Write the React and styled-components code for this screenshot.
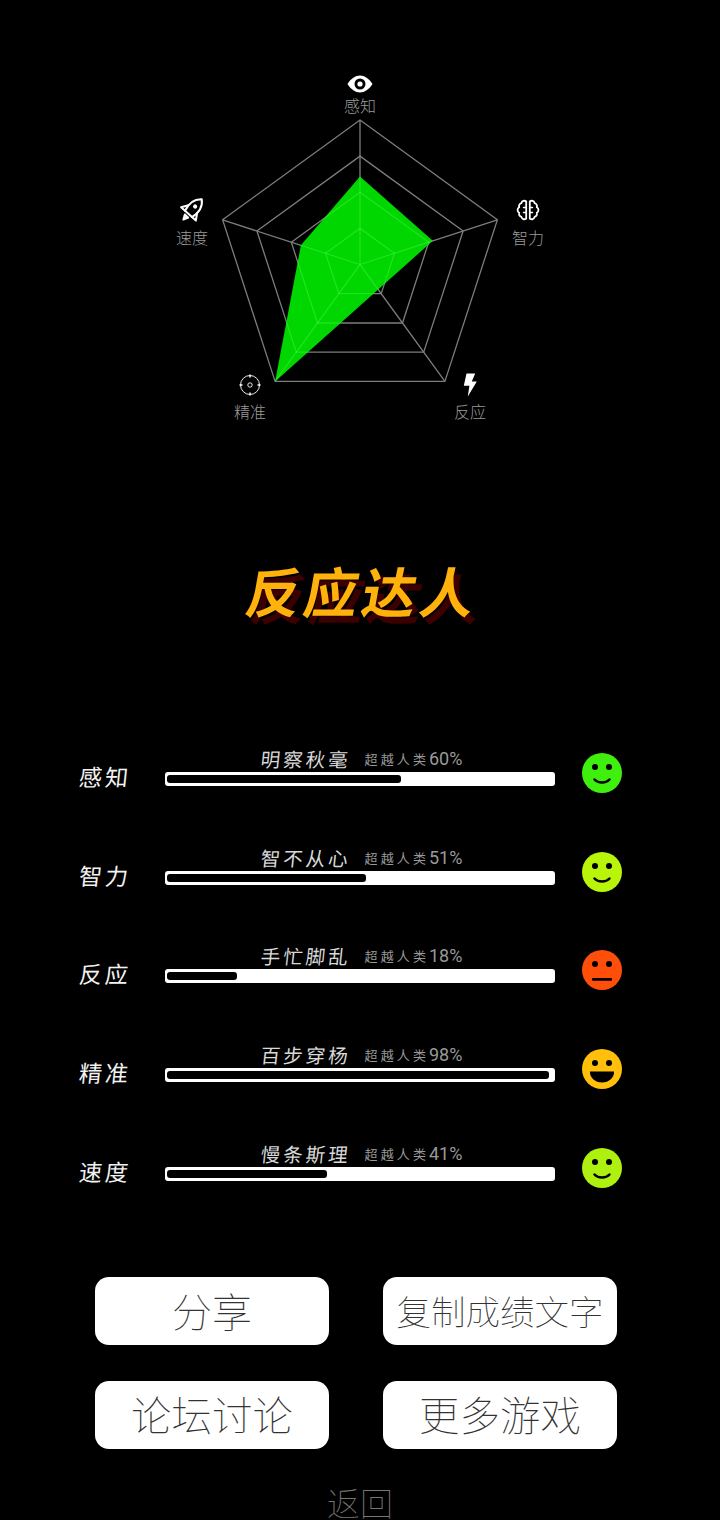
import React from "react";
import styled, { createGlobalStyle } from "styled-components";

const Global = createGlobalStyle`
  html, body { margin: 0; padding: 0; background: #000; }
  * { box-sizing: border-box; }
`;

const CJK = `"Noto Sans CJK SC", "Noto Sans CJK TC", sans-serif`;

const Page = styled.div`
  width: 720px;
  height: 1520px;
  overflow: hidden;
  background: #000;
  display: flex;
  flex-direction: column;
  font-family: Roboto, ${CJK};
`;

const Radar = styled.section`
  position: relative;
  width: 720px;
  height: 440px;
  flex: none;
`;

const RadarSvg = styled.svg`
  display: block;
  width: 720px;
  height: 440px;
`;

const Axis = styled.div`
  position: absolute;
  width: 60px;
  margin-left: -30px;
  display: flex;
  flex-direction: column;
  align-items: center;
`;

const AxisIcon = styled.div`
  height: 26px;
  display: flex;
  align-items: center;
  justify-content: center;
  color: #fff;
`;

const AxisLabel = styled.div`
  font-size: 16px;
  line-height: 20px;
  margin-top: ${(p) => p.$shift}px;
  font-weight: 300;
  color: #9a9a9a;
`;

const Title = styled.h1`
  margin: 120px 0 0;
  padding-left: 5px;
  height: 70px;
  text-align: center;
  font-size: 54px;
  line-height: 70px;
  font-weight: 700;
  letter-spacing: 4px;
  color: #ffb20c;
  text-shadow: 7px 7px 0 #3c0000;
  transform: skewX(-10deg);
`;

const List = styled.div`
  margin-top: 115px;
  display: flex;
  flex-direction: column;
  gap: 48.7px;
  padding-left: 80px;
`;

const Row = styled.div`
  display: grid;
  grid-template-columns: 85px 390px 40px;
  height: 50px;
`;

const RowLabel = styled.div`
  font-size: 23px;
  line-height: 30px;
  padding-top: 19px;
  letter-spacing: 3px;
  color: #f2f2f2;
  white-space: nowrap;
  transform-origin: left center;
  transform: skewX(-6deg);
`;

const Track = styled.div`
  display: flex;
  flex-direction: column;
`;

const Caption = styled.div`
  height: 27px;
  display: flex;
  justify-content: center;
  align-items: center;
  gap: 14px;
  padding-left: 3px;
  white-space: nowrap;
`;

const Motto = styled.span`
  font-size: 19.5px;
  letter-spacing: 3px;
  color: #d8d8d8;
  transform: skewX(-6deg);
`;

const Beat = styled.span`
  font-size: 18px;
  color: #999;
  display: flex;
  align-items: center;
`;

const BeatPrefix = styled.span`
  font-size: 13px;
  letter-spacing: 3.1px;
`;

const Bar = styled.div`
  position: relative;
  width: 390px;
  height: 14px;
  background: #fff;
  border-radius: 3px;
`;

const BarFill = styled.div`
  position: absolute;
  left: 2px;
  top: 3px;
  height: 8px;
  border-radius: 3px;
  background: #000;
`;

const Face = styled.svg`
  display: block;
  width: 40px;
  height: 40px;
  margin: 8px 0 0 27px;
`;

const Buttons = styled.div`
  margin: 87.2px 0 0 95px;
  display: grid;
  grid-template-columns: 234px 234px;
  grid-auto-rows: 68px;
  column-gap: 54px;
  row-gap: 36px;
`;

const Btn = styled.button`
  border: none;
  padding: 5px 0 0;
  background: #fff;
  border-radius: 14px;
  color: #333;
  font-family: inherit;
  font-weight: 100;
  font-size: ${(p) => p.$size}px;
  line-height: 63px;
  white-space: nowrap;
`;

const Back = styled.div`
  margin-top: 36px;
  text-align: center;
  font-size: 33px;
  line-height: 40px;
  font-weight: 100;
  color: #777;
`;

const CX = 360;
const CY = 264.5;
const R = 144.5;
const angles = [0, 72, 144, 216, 288].map((a) => (a * Math.PI) / 180);
const pt = (i, t) => [CX + R * t * Math.sin(angles[i]), CY - R * t * Math.cos(angles[i])];
const poly = (vals) => vals.map((v, i) => pt(i, v).map((n) => n.toFixed(1)).join(",")).join(" ");
const scorePoints = poly([0.61, 0.53, 0.214, 1, 0.43]);

const Grid = ({ stroke, clip }) => (
  <g fill="none" stroke={stroke} strokeWidth="1.3" clipPath={clip}>
    {[0.25, 0.5, 0.75, 1].map((t) => (
      <polygon key={t} points={poly([t, t, t, t, t])} />
    ))}
    {angles.map((_, i) => {
      const [x, y] = pt(i, 1);
      return <line key={i} x1={CX} y1={CY} x2={x} y2={y} />;
    })}
  </g>
);

const EyeIcon = () => (
  <svg width="26" height="20" viewBox="0 0 26 20">
    <path fillRule="evenodd" fill="currentColor" d="M0.5 10C4 4.5 8.5 1.5 13 1.5S22 4.5 25.5 10C22 15.5 17.5 18.5 13 18.5S4 15.5 .5 10ZM13 4.5a5.5 5.5 0 1 0 0 11a5.5 5.5 0 1 0 0-11Z" />
    <circle cx="13" cy="10" r="2.6" fill="currentColor" />
  </svg>
);

const BrainIcon = () => (
  <svg width="24" height="24" viewBox="0 0 24 24" fill="none" stroke="currentColor" strokeWidth="1.8" strokeLinejoin="round" strokeLinecap="round">
    <path d="M10.2 3.4A3 3 0 0 0 5.4 5.2A3 3 0 0 0 3.2 9.2A3.2 3.2 0 0 0 3.2 14.8A3 3 0 0 0 5.4 18.8A3 3 0 0 0 10.2 20.6Z" />
    <path d="M13.8 3.4A3 3 0 0 1 18.6 5.2A3 3 0 0 1 20.8 9.2A3.2 3.2 0 0 1 20.8 14.8A3 3 0 0 1 18.6 18.8A3 3 0 0 1 13.8 20.6Z" />
    <path d="M10.2 9.5H7.5M10.2 14.5H7.5M13.8 9.5H16.5M13.8 14.5H16.5" strokeWidth="1.4" />
  </svg>
);

const BoltIcon = () => (
  <svg width="16" height="24" viewBox="0 0 16 24">
    <path fill="currentColor" d="M4.5 0.5H13.2L9.8 8.5H14.8L5.8 23.5L7.4 12.8H1.8Z" />
  </svg>
);

const TargetIcon = () => (
  <svg width="22" height="22" viewBox="0 0 22 22" fill="none" stroke="currentColor" strokeWidth="0.9">
    <circle cx="11" cy="11" r="9.5" />
    <circle cx="11" cy="11" r="2.2" />
    <path strokeWidth="1.5" d="M11 0.5V3.5M11 18.5V21.5M0.5 11H3.5M18.5 11H21.5" />
  </svg>
);

const RocketIcon = () => (
  <svg width="28" height="28" viewBox="0 0 24 24" fill="none" stroke="currentColor" strokeWidth="1.7" strokeLinejoin="round" strokeLinecap="round">
    <g transform="rotate(42 12 12)">
      <path d="M12 -0.5C16.8 3.5 18 10 16 16.5H8C6 10 7.2 3.5 12 -0.5Z" />
      <circle cx="12" cy="8" r="1.8" fill="currentColor" stroke="none" />
      <path d="M7 11L3.5 16.5L8 16.5M17 11L20.5 16.5L16 16.5" />
      <path d="M10 19H14L12 23Z" fill="currentColor" />
    </g>
  </svg>
);

const axes = [
  { name: "感知", x: 360, y: 71, icon: <EyeIcon />, shift: 0 },
  { name: "智力", x: 528, y: 197, icon: <BrainIcon />, shift: 6 },
  { name: "反应", x: 470, y: 372, icon: <BoltIcon />, shift: 5 },
  { name: "精准", x: 250, y: 372, icon: <TargetIcon />, shift: 5 },
  { name: "速度", x: 192, y: 197, icon: <RocketIcon />, shift: 6 },
];

const stats = [
  { name: "感知", motto: "明察秋毫", pct: 60, color: "#3ff00e", mood: "smile" },
  { name: "智力", motto: "智不从心", pct: 51, color: "#b9f50a", mood: "smile" },
  { name: "反应", motto: "手忙脚乱", pct: 18, color: "#ff4d0a", mood: "flat" },
  { name: "精准", motto: "百步穿杨", pct: 98, color: "#ffbf0a", mood: "grin" },
  { name: "速度", motto: "慢条斯理", pct: 41, color: "#aef00f", mood: "smile" },
];

const Smiley = ({ color, mood }) => (
  <Face viewBox="0 0 40 40">
    <circle cx="20" cy="20" r="20" fill={color} />
    <circle cx="13" cy="14" r="3" fill="#000" />
    <circle cx="27" cy="14" r="3" fill="#000" />
    {mood === "smile" && <path d="M12.5 26.5C16 30.5 24 30.5 27.5 26.5" fill="none" stroke="#000" strokeWidth="2.5" strokeLinecap="round" />}
    {mood === "flat" && <rect x="10" y="28" width="20" height="2.8" rx="1" fill="#000" />}
    {mood === "grin" && <path d="M8 22.5H32C32.5 28.5 27 33.5 20 33.5S7.5 28.5 8 22.5Z" fill="#000" />}
  </Face>
);

export default function App() {
  return (
    <Page>
      <Global />
      <Radar>
        <RadarSvg viewBox="0 0 720 440">
          <defs>
            <clipPath id="score">
              <polygon points={scorePoints} />
            </clipPath>
          </defs>
          <Grid stroke="#7d7d7d" />
          <polygon points={scorePoints} fill="#00d600" />
          <Grid stroke="rgba(90,255,90,0.35)" clip="url(#score)" />
        </RadarSvg>
        {axes.map((a) => (
          <Axis key={a.name} style={{ left: a.x, top: a.y }}>
            <AxisIcon>{a.icon}</AxisIcon>
            <AxisLabel $shift={a.shift}>{a.name}</AxisLabel>
          </Axis>
        ))}
      </Radar>
      <Title>反应达人</Title>
      <List>
        {stats.map((s) => (
          <Row key={s.name}>
            <RowLabel>{s.name}</RowLabel>
            <Track>
              <Caption>
                <Motto>{s.motto}</Motto>
                <Beat>
                  <BeatPrefix>超越人类</BeatPrefix>
                  {s.pct}%
                </Beat>
              </Caption>
              <Bar>
                <BarFill style={{ width: `${s.pct}%` }} />
              </Bar>
            </Track>
            <Smiley color={s.color} mood={s.mood} />
          </Row>
        ))}
      </List>
      <Buttons>
        <Btn $size={40}>分享</Btn>
        <Btn $size={34.5}>复制成绩文字</Btn>
        <Btn $size={40.5}>论坛讨论</Btn>
        <Btn $size={40.5}>更多游戏</Btn>
      </Buttons>
      <Back>返回</Back>
    </Page>
  );
}
